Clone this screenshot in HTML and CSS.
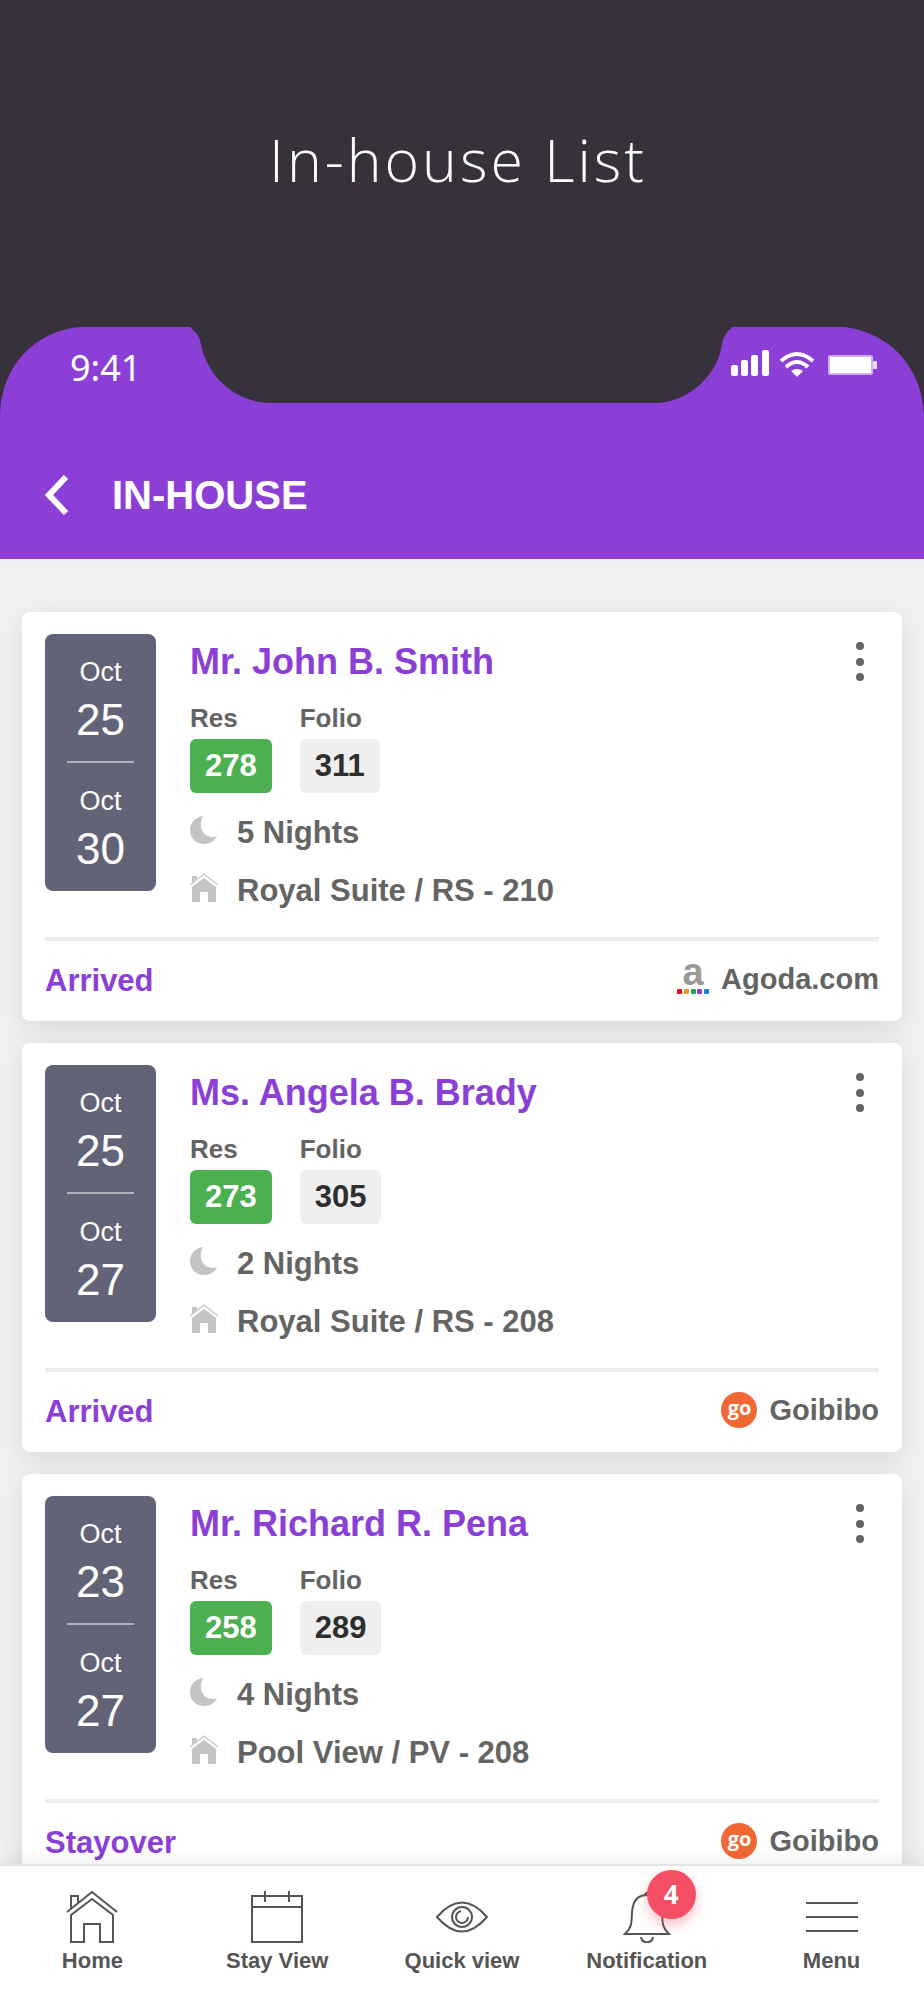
FILE: index.html
```html
<!DOCTYPE html>
<html lang="en">
<head>
  <meta charset="UTF-8">
  <meta name="viewport" content="width=device-width, initial-scale=1.0">
  <title>In-house List</title>
  <link rel="stylesheet" href="styles.css">
</head>
<body>
  <!-- shared icons -->
  <svg class="sprite" aria-hidden="true">
    <symbol id="moon" viewBox="0 0 28 30">
      <path d="M13 1 C5 2 0 8 0 15 C0 23 6 29 14 29 C20 29 25 26 27 21 C17 25 6 15 13 1 Z" fill="#c4c4c4"/>
    </symbol>
    <symbol id="house" viewBox="0 0 28 30">
      <path d="M2 10 V3 H7 V6 Z" fill="#c4c4c4"/>
      <path d="M0 12 L14 1 L28 12" fill="none" stroke="#c4c4c4" stroke-width="1.2"/>
      <path d="M2 14 L14 5 L26 14 V29 H18 V19 H10 V29 H2 Z" fill="#c4c4c4"/>
    </symbol>
    <symbol id="dots" viewBox="0 0 8 40">
      <circle cx="4" cy="4" r="4"/><circle cx="4" cy="20" r="4"/><circle cx="4" cy="35" r="4"/>
    </symbol>
  </svg>

  <div class="banner">
    <h1>In-house List</h1>
  </div>

  <header>
    <div class="status-bar">
      <svg class="notch" viewBox="0 0 924 94" aria-hidden="true">
        <path d="M0 94 V88 C1 40 34 4 80 0 H190 C196 5 200 10 201 17 C207 50 236 76 272 76 H655 C688 76 718 48 722 17 C723 10 727 4 733 0 H845 C890 6 922 40 924 88 V94 Z" fill="#8b3fd6"/>
      </svg>
      <div class="status-items">
        <span class="time">9:41</span>
        <svg class="status-icons" viewBox="0 0 146 28" width="146" height="28" fill="#fff" aria-hidden="true">
          <rect x="0" y="16" width="7" height="11" rx="2"/>
          <rect x="10" y="11" width="7" height="16" rx="2"/>
          <rect x="20" y="6" width="7" height="21" rx="2"/>
          <rect x="31" y="1" width="7" height="26" rx="2"/>
          <path d="M50 12 Q66 -2 82 12" fill="none" stroke="#fff" stroke-width="4"/>
          <path d="M55 18 Q66 8 77 18" fill="none" stroke="#fff" stroke-width="4"/>
          <path d="M60 22 Q66 18 72 22 L66 28 Z"/>
          <rect x="98" y="7" width="43" height="18" rx="1" fill="none" stroke="#cfaef0" stroke-width="2"/>
          <rect x="99" y="8" width="41" height="16"/>
          <rect x="142" y="12" width="4" height="8" rx="1" fill="#e9dcf8"/>
        </svg>
      </div>
    </div>
    <div class="title-bar">
      <button class="back" aria-label="Back">
        <svg viewBox="0 0 24 40" width="24" height="40"><path d="M21 2 L4 20 L21 38" fill="none" stroke="#fff" stroke-width="6"/></svg>
      </button>
      <h2>IN-HOUSE</h2>
    </div>
  </header>

  <main class="guest-list">
    <article class="card">
      <div class="card-main">
        <div class="dates">
          <span class="month">Oct</span>
          <span class="day">25</span>
          <hr>
          <span class="month">Oct</span>
          <span class="day">30</span>
        </div>
        <div class="details">
          <h3>Mr. John B. Smith</h3>
          <div class="numbers">
            <div><span class="label">Res</span><span class="chip res">278</span></div>
            <div><span class="label">Folio</span><span class="chip">311</span></div>
          </div>
          <p class="info"><svg><use href="#moon"/></svg>5 Nights</p>
          <p class="info"><svg><use href="#house"/></svg>Royal Suite / RS - 210</p>
        </div>
        <button class="more" aria-label="More options"><svg><use href="#dots"/></svg></button>
      </div>
      <div class="card-footer">
        <span class="status">Arrived</span>
        <span class="source">
          <span class="agoda">
            <span>a</span>
            <svg viewBox="0 0 32 5" aria-hidden="true">
              <rect x="0" width="5" height="5" rx="1" fill="#f5001d"/>
              <rect x="7" width="5" height="5" rx="1" fill="#f39a1b"/>
              <rect x="14" width="5" height="5" rx="1" fill="#16ab50"/>
              <rect x="20" width="5" height="5" rx="1" fill="#9436d6"/>
              <rect x="27" width="5" height="5" rx="1" fill="#1583e2"/>
            </svg>
          </span>
          Agoda.com
        </span>
      </div>
    </article>

    <article class="card">
      <div class="card-main">
        <div class="dates">
          <span class="month">Oct</span>
          <span class="day">25</span>
          <hr>
          <span class="month">Oct</span>
          <span class="day">27</span>
        </div>
        <div class="details">
          <h3>Ms. Angela B. Brady</h3>
          <div class="numbers">
            <div><span class="label">Res</span><span class="chip res">273</span></div>
            <div><span class="label">Folio</span><span class="chip">305</span></div>
          </div>
          <p class="info"><svg><use href="#moon"/></svg>2 Nights</p>
          <p class="info"><svg><use href="#house"/></svg>Royal Suite / RS - 208</p>
        </div>
        <button class="more" aria-label="More options"><svg><use href="#dots"/></svg></button>
      </div>
      <div class="card-footer">
        <span class="status">Arrived</span>
        <span class="source"><span class="goibibo">go</span>Goibibo</span>
      </div>
    </article>

    <article class="card">
      <div class="card-main">
        <div class="dates">
          <span class="month">Oct</span>
          <span class="day">23</span>
          <hr>
          <span class="month">Oct</span>
          <span class="day">27</span>
        </div>
        <div class="details">
          <h3>Mr. Richard R. Pena</h3>
          <div class="numbers">
            <div><span class="label">Res</span><span class="chip res">258</span></div>
            <div><span class="label">Folio</span><span class="chip">289</span></div>
          </div>
          <p class="info"><svg><use href="#moon"/></svg>4 Nights</p>
          <p class="info"><svg><use href="#house"/></svg>Pool View / PV - 208</p>
        </div>
        <button class="more" aria-label="More options"><svg><use href="#dots"/></svg></button>
      </div>
      <div class="card-footer">
        <span class="status">Stayover</span>
        <span class="source"><span class="goibibo">go</span>Goibibo</span>
      </div>
    </article>
  </main>

  <nav>
    <a href="#home">
      <svg viewBox="0 0 52 52"><path d="M1 21 L26 1 L51 21 M5 18 V5 H12 V12 M5 24 L26 8 L47 24 V51 H34 V33 H18 V51 H5 Z"/></svg>
      Home
    </a>
    <a href="#stay">
      <svg viewBox="0 0 52 52"><path d="M1 5 H51 V51 H1 Z M1 16 H51 M14 0 V11 M38 0 V11"/></svg>
      Stay View
    </a>
    <a href="#quick">
      <svg viewBox="0 0 52 52"><path d="M1 26 Q26 -3 51 26 Q26 55 1 26 Z"/><circle cx="26" cy="26" r="10"/><path d="M25 20 A6 6 0 1 0 32 26"/></svg>
      Quick view
    </a>
    <a href="#notification">
      <span class="bell">
        <svg viewBox="0 0 52 52"><path d="M4 43 H48 C38 34 43 25 40 14 C38 7 33 4 26 4 C19 4 14 7 12 15 C9 25 14 34 4 43 Z M24 4 Q26 -1 28 4 M20 46 C21 53 31 53 32 46"/></svg>
        <span class="badge">4</span>
      </span>
      Notification
    </a>
    <a href="#menu">
      <svg viewBox="0 0 52 52"><path d="M0 12 H52 M0 26 H52 M0 40 H52"/></svg>
      Menu
    </a>
  </nav>
</body>
</html>
```
FILE: styles.css
```css
* {
  box-sizing: border-box;
}
body {
  font-family: "Liberation Sans", Arial, sans-serif;
  background-color: #eff1f3;
  margin: 0;
  height: 100vh;
  display: flex;
  flex-direction: column;
}
h1, h2, h3, p {
  margin: 0;
}
button {
  background: none;
  border: none;
  padding: 0;
  cursor: pointer;
}
svg {
  display: block;
  flex: none;
}
.sprite {
  position: absolute;
  width: 0;
  height: 0;
}

/* top banner */
.banner {
  background-color: #37313b;
  color: white;
  padding: 118px 28px 127px 20px;
  text-align: center;
}
.banner h1 {
  font-family: "Open Sans", sans-serif;
  font-weight: 300;
  font-size: 59px;
  line-height: 82px;
  letter-spacing: 3px;
}

/* header */
header {
  background-color: #8b3fd6;
  color: white;
}
.status-bar {
  display: grid;
  background-color: #37313b;
}
.notch {
  grid-area: 1 / 1;
  width: 100%;
}
.status-items {
  grid-area: 1 / 1;
  display: flex;
  justify-content: space-between;
  align-items: flex-start;
  padding: 16px 47px 0 70px;
}
.time {
  font-family: "Noto Sans", sans-serif;
  font-size: 36px;
  line-height: 50px;
}
.status-icons {
  margin-top: 6px;
}
.title-bar {
  display: flex;
  align-items: center;
  gap: 43px;
  padding: 51px 45px 41px;
}
.title-bar h2 {
  font-size: 40px;
  line-height: 46px;
}

/* guest cards */
.guest-list {
  flex: 1;
  min-height: 0;
  overflow-y: auto;
  scrollbar-width: none;
  display: flex;
  flex-direction: column;
  gap: 22px;
  padding: 53px 22px 22px;
}
.card {
  flex: none;
  background-color: white;
  border-radius: 8px;
  padding: 22px 23px 21px;
  box-shadow: 0 8px 30px rgba(0, 0, 0, 0.1);
}
.card-main {
  display: flex;
  align-items: flex-start;
}
.dates {
  width: 111px;
  background-color: #636378;
  color: white;
  border-radius: 8px;
  padding: 22px 0 10px;
  text-align: center;
}
.dates span {
  display: block;
}
.month {
  font-size: 27px;
  line-height: 32px;
}
.day {
  font-size: 44px;
  line-height: 64px;
}
.dates hr {
  width: 67px;
  height: 2px;
  border: none;
  background-color: #b1b1bb;
  margin: 9px auto 22px;
}
.details {
  flex: 1;
  margin-left: 34px;
  color: #646464;
  font-weight: bold;
}
.details h3 {
  color: #8b3fd6;
  font-size: 36px;
  line-height: 40px;
  margin: 8px 0 20px;
}
.numbers {
  display: flex;
  gap: 28px;
}
.label {
  display: block;
  font-size: 26px;
  line-height: 32px;
  margin-bottom: 5px;
}
.chip {
  display: inline-block;
  background-color: #efefef;
  color: #2e2e2e;
  border-radius: 6px;
  padding: 0 15px;
  font-size: 31px;
  line-height: 54px;
}
.res {
  background-color: #4caf50;
  color: white;
}
.info {
  display: flex;
  align-items: center;
  gap: 19px;
  font-size: 31px;
  line-height: 36px;
  margin-top: 22px;
}
.info svg {
  width: 28px;
  height: 30px;
  margin-bottom: 6px;
}
.more {
  margin: 8px 15px 0 0;
}
.more svg {
  width: 8px;
  height: 40px;
  fill: #646464;
}
.card-footer {
  display: flex;
  justify-content: space-between;
  align-items: center;
  border-top: 4px solid #ededed;
  margin-top: 28px;
  padding-top: 20px;
}
.status {
  color: #8b3fd6;
  font-size: 31px;
  font-weight: bold;
}
.source {
  display: flex;
  align-items: center;
  gap: 12px;
  color: #646464;
  font-size: 29px;
  font-weight: bold;
  line-height: 36px;
  margin-bottom: 3px;
}

/* booking source logos */
.goibibo {
  width: 36px;
  height: 36px;
  border-radius: 50%;
  background-color: #f26835;
  color: white;
  font-family: "Open Sans", sans-serif;
  font-size: 20px;
  line-height: 32px;
  text-align: center;
}
.agoda {
  width: 32px;
  height: 36px;
  color: #999;
  font-size: 38px;
  text-align: center;
}
.agoda span {
  display: block;
  height: 28px;
  line-height: 22px;
}
.agoda svg {
  width: 32px;
  height: 5px;
}

/* bottom navigation */
nav {
  position: relative;
  display: grid;
  grid-template-columns: repeat(5, 1fr);
  background-color: white;
  border-top: 2px solid #e6e6e6;
  box-shadow: 0 -2px 20px rgba(0, 0, 0, 0.08);
  padding: 25px 0;
}
nav a {
  display: flex;
  flex-direction: column;
  align-items: center;
  gap: 4px;
  color: #555;
  font-size: 22px;
  font-weight: bold;
  line-height: 28px;
  text-decoration: none;
}
nav svg {
  width: 52px;
  height: 52px;
  fill: none;
  stroke: #555;
  stroke-width: 2;
}
.bell {
  position: relative;
}
.badge {
  position: absolute;
  top: -21px;
  left: 26px;
  width: 49px;
  height: 49px;
  border-radius: 50%;
  background-color: #f44e64;
  box-shadow: 0 6px 12px rgba(244, 78, 100, 0.35);
  color: white;
  font-family: "Open Sans", sans-serif;
  font-size: 26px;
  line-height: 49px;
  text-align: center;
}
```
